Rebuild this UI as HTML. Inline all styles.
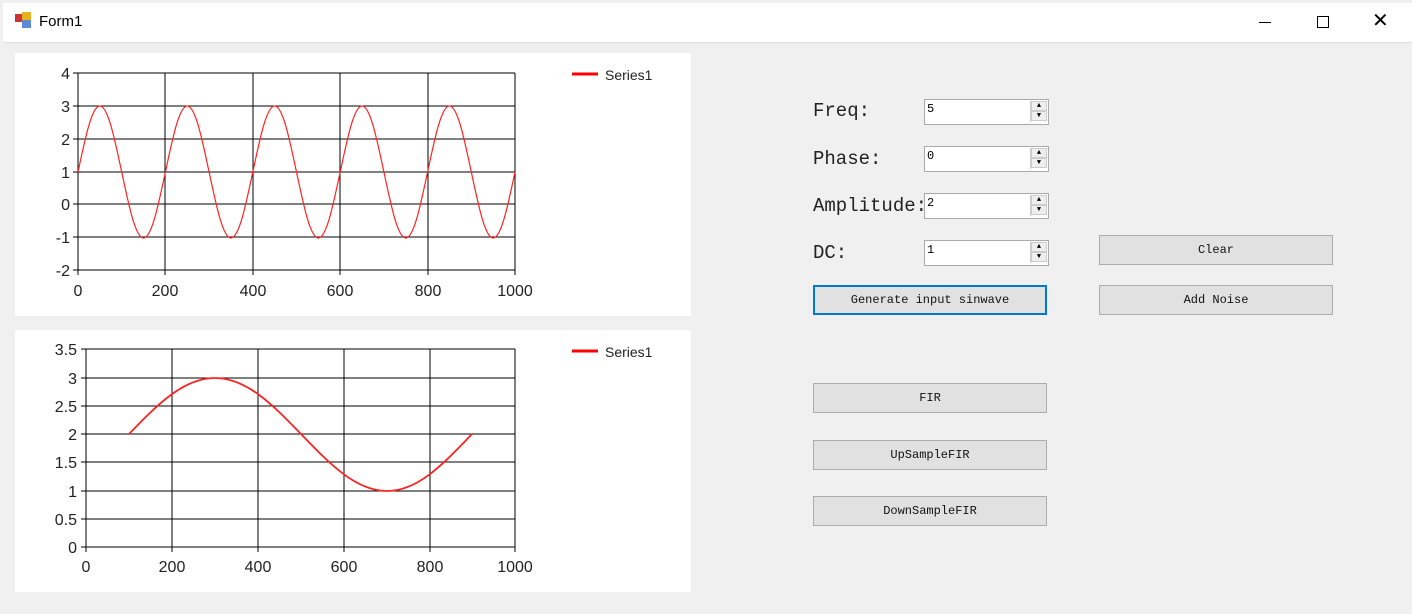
<!DOCTYPE html>
<html><head><style>
body{margin:0;width:1412px;height:614px;background:#f0f0f0;position:relative;overflow:hidden;font-family:"Liberation Sans",sans-serif}
.a{position:absolute}
.tb{left:3px;top:3px;width:1409px;height:39px;background:#fff;border-bottom:1px solid #ddd}
.panel{background:#fff}
.lbl{font-family:"Liberation Mono","Noto Serif CJK SC",monospace;font-size:19px;color:#222}
.inp{background:#fff;border:1px solid #aaa;height:24px;width:123px;font-size:12px;font-family:"Liberation Mono",monospace}
.inp span{position:absolute;left:2px;top:2px}
.spin{position:absolute;right:1px;top:1px;width:16px;height:21px;border-left:1px solid #ccc}
.spin div{height:10px;background:#eee;border:1px solid #ccc;box-sizing:border-box;font-size:7px;text-align:center;line-height:8px}
.btn{background:#e1e1e1;border:1px solid #adadad;box-sizing:border-box;text-align:center;font-family:"Liberation Mono",monospace;font-size:12px;color:#111}
</style></head><body>
<div class="a tb"></div>
<div class="a" style="left:15px;top:14px;width:8px;height:8px;background:#c33"></div>
<div class="a" style="left:22px;top:12px;width:9px;height:8px;background:#e8b020"></div>
<div class="a" style="left:22px;top:20px;width:9px;height:8px;background:#5a8ad8"></div>
<div class="a" style="left:39px;top:13px;font-size:15px;color:#000">Form1</div>
<div class="a" style="left:1259px;top:22px;width:12px;height:1px;background:#000"></div>
<div class="a" style="left:1317px;top:16px;width:10px;height:10px;border:1px solid #000"></div>
<div class="a" style="left:1372px;top:8px;font-size:20px;color:#000">✕</div>

<svg class="a" style="left:0;top:0" width="1412" height="614" font-family="Liberation Sans,sans-serif" font-size="16" fill="#222">
<rect x="15" y="53" width="676" height="263" fill="#fff"/>
<rect x="15" y="330" width="676" height="262" fill="#fff"/>
<g stroke="#000" stroke-width="1">
<path d="M78 73H515M78 106H515M78 139H515M78 172H515M78 204H515M78 237H515M78 270H515M73 73H78M73 106H78M73 139H78M73 172H78M73 204H78M73 237H78M73 270H78"/>
<path d="M78 73V275M165 73V275M253 73V275M340 73V275M428 73V275M515 73V275"/>
<path d="M86 349H515M86 378H515M86 406H515M86 434H515M86 462H515M86 491H515M86 519H515M81 547H515M81 349H86M81 378H86M81 406H86M81 434H86M81 462H86M81 491H86M81 519H86"/>
<path d="M86 349V552M172 349V552M258 349V552M344 349V552M430 349V552M515 349V552"/>
</g>
<path fill="none" stroke="#f22" stroke-width="1.2" d="M78,172 C85.3,137.6 91.85,106 99.85,106 S114.4,137.6 121.7,172 S135.55,238 143.55,238 S158.1,206.4 165.4,172 S179.25,106 187.25,106 S201.8,137.6 209.1,172 S222.95,238 230.95,238 S245.5,206.4 252.8,172 S266.65,106 274.65,106 S289.2,137.6 296.5,172 S310.35,238 318.35,238 S332.9,206.4 340.2,172 S354.05,106 362.05,106 S376.6,137.6 383.9,172 S397.75,238 405.75,238 S420.3,206.4 427.6,172 S441.45,106 449.45,106 S464,137.6 471.3,172 S485.15,238 493.15,238 S507.7,206.4 515,172"/>
<path fill="none" stroke="#f22" stroke-width="1.8" d="M129,434 C157.7,404.3 183.5,378 215,378 S272.3,404.3 301,434 S355.5,491 387,491 S443.3,463.7 472,434"/>
<g text-anchor="end">
<text x="70" y="79">4</text><text x="70" y="112">3</text><text x="70" y="145">2</text><text x="70" y="178">1</text><text x="70" y="210">0</text><text x="70" y="243">-1</text><text x="70" y="276">-2</text>
<text x="77" y="355">3.5</text><text x="77" y="384">3</text><text x="77" y="412">2.5</text><text x="77" y="440">2</text><text x="77" y="468">1.5</text><text x="77" y="497">1</text><text x="77" y="525">0.5</text><text x="77" y="553">0</text>
</g>
<g text-anchor="middle">
<text x="78" y="296">0</text><text x="165" y="296">200</text><text x="253" y="296">400</text><text x="340" y="296">600</text><text x="428" y="296">800</text><text x="515" y="296">1000</text>
<text x="86" y="572">0</text><text x="172" y="572">200</text><text x="258" y="572">400</text><text x="344" y="572">600</text><text x="430" y="572">800</text><text x="515" y="572">1000</text>
</g>
<path d="M572 74H598M572 351H598" stroke="#f00" stroke-width="3"/>
<text x="605" y="80" font-size="14">Series1</text>
<text x="605" y="357" font-size="14">Series1</text>
</svg>

<div class="a lbl" style="left:813px;top:100px">Freq:</div>
<div class="a lbl" style="left:813px;top:148px">Phase:</div>
<div class="a lbl" style="left:813px;top:195px">Amplitude:</div>
<div class="a lbl" style="left:813px;top:242px">DC:</div>
<div class="a inp" style="left:924px;top:99px"><span>5</span><div class="spin"><div>▲</div><div>▼</div></div></div>
<div class="a inp" style="left:924px;top:146px"><span>0</span><div class="spin"><div>▲</div><div>▼</div></div></div>
<div class="a inp" style="left:924px;top:193px"><span>2</span><div class="spin"><div>▲</div><div>▼</div></div></div>
<div class="a inp" style="left:924px;top:240px"><span>1</span><div class="spin"><div>▲</div><div>▼</div></div></div>
<div class="a btn" style="left:1099px;top:235px;width:234px;height:30px;line-height:28px">Clear</div>
<div class="a btn" style="left:1099px;top:285px;width:234px;height:30px;line-height:28px">Add Noise</div>
<div class="a btn" style="left:813px;top:285px;width:234px;height:30px;line-height:26px;border:2px solid #0078d7">Generate input sinwave</div>
<div class="a btn" style="left:813px;top:383px;width:234px;height:30px;line-height:28px">FIR</div>
<div class="a btn" style="left:813px;top:440px;width:234px;height:30px;line-height:28px">UpSampleFIR</div>
<div class="a btn" style="left:813px;top:496px;width:234px;height:30px;line-height:28px">DownSampleFIR</div>
</body></html>
